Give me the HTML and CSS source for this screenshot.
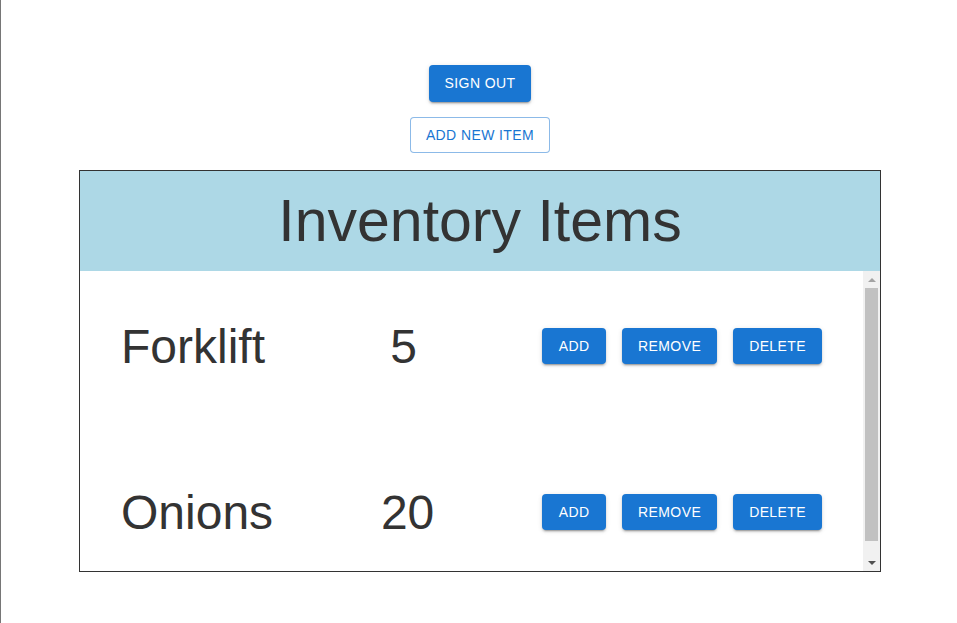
FILE: index.html
```html
<!DOCTYPE html>
<html lang="en">
<head>
<meta charset="utf-8">
<title>Inventory</title>
<link rel="stylesheet" href="styles.css">
</head>
<body>
<div class="page">
  <button class="btn btn-contained">Sign Out</button>
  <button class="btn btn-outlined">Add New Item</button>
  <div class="inventory">
    <div class="inventory-header">
      <h1 class="inventory-title">Inventory Items</h1>
    </div>
    <div class="inventory-body">
      <div class="inventory-list">
        <div class="item-row">
          <span class="item-name">Forklift</span>
          <span class="item-count">5</span>
          <div class="item-actions">
            <button class="btn btn-contained">Add</button>
            <button class="btn btn-contained">Remove</button>
            <button class="btn btn-contained">Delete</button>
          </div>
        </div>
        <div class="item-row">
          <span class="item-name">Onions</span>
          <span class="item-count">20</span>
          <div class="item-actions">
            <button class="btn btn-contained">Add</button>
            <button class="btn btn-contained">Remove</button>
            <button class="btn btn-contained">Delete</button>
          </div>
        </div>
      </div>
      <div class="scrollbar" aria-hidden="true">
        <div class="scroll-btn"><span class="arrow arrow-up"></span></div>
        <div class="scroll-track"><div class="scroll-thumb"></div></div>
        <div class="scroll-btn"><span class="arrow arrow-down"></span></div>
      </div>
    </div>
  </div>
</div>
</body>
</html>
```
FILE: styles.css
```css
html, body {
  margin: 0;
  padding: 0;
  height: 100%;
}
body {
  background: #fff;
  border-left: 1px solid #767676;
  box-sizing: border-box;
  font-family: "Liberation Sans", Arial, Helvetica, sans-serif;
  color: #333;
}
.page {
  display: flex;
  flex-direction: column;
  align-items: center;
  gap: 16px;
  padding-top: 65px;
  padding-left: 2px;
}
.btn {
  font-family: "Liberation Sans", Arial, Helvetica, sans-serif;
  font-size: 14px;
  font-weight: 500;
  line-height: 1.75;
  letter-spacing: 0.4px;
  text-transform: uppercase;
  min-width: 64px;
  border-radius: 4px;
  cursor: pointer;
  box-sizing: border-box;
  margin: 0;
}
.btn-contained {
  background: #1976d2;
  color: #fff;
  border: 0;
  padding: 6px 16px;
  box-shadow: 0px 3px 1px -2px rgba(0,0,0,0.2), 0px 2px 2px 0px rgba(0,0,0,0.14), 0px 1px 5px 0px rgba(0,0,0,0.12);
}
.btn-outlined {
  background: #fff;
  color: #1976d2;
  border: 1px solid rgba(25,118,210,0.5);
  padding: 5px 15px;
  margin-top: -1px;
}
.inventory {
  width: 800px;
  border: 1px solid #333;
  margin-top: 1px;
}
.inventory-header {
  height: 100px;
  background: #add8e6;
  display: flex;
  align-items: center;
  justify-content: center;
}
.inventory-title {
  margin: 0;
  font-size: 59px;
  font-weight: normal;
  color: #333;
}
.inventory-body {
  display: flex;
  height: 300px;
}
.inventory-list {
  flex: 1;
  overflow: hidden;
  display: flex;
  flex-direction: column;
  gap: 16px;
}
.item-row {
  flex: 0 0 150px;
  display: flex;
  align-items: center;
  justify-content: space-between;
  padding: 0 41px 0 41px;
}
.item-name, .item-count {
  font-size: 48px;
  color: #333;
}
.item-actions {
  display: flex;
  gap: 16px;
}
.scrollbar {
  width: 17px;
  background: #f1f1f1;
  display: flex;
  flex-direction: column;
}
.scroll-btn {
  height: 17px;
  display: flex;
  align-items: center;
  justify-content: center;
}
.scroll-track {
  flex: 1;
  padding: 0 2px 0 2px;
}
.scroll-thumb {
  height: 253px;
  background: #c1c1c1;
}
.arrow {
  width: 0;
  height: 0;
  border-left: 4px solid transparent;
  border-right: 4px solid transparent;
}
.arrow-up {
  border-bottom: 4px solid #a3a3a3;
}
.arrow-down {
  border-top: 4px solid #505050;
}
```
